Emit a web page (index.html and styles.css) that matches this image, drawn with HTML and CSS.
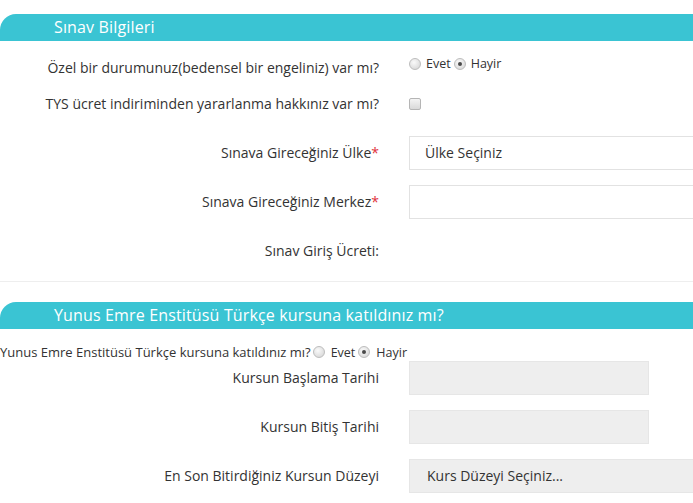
FILE: index.html
```html
<!DOCTYPE html>
<html lang="tr">
<head>
<meta charset="utf-8">
<title>Sınav Bilgileri</title>
<link rel="stylesheet" href="styles.css">
</head>
<body>
<div class="page">
  <div class="section-header">Sınav Bilgileri</div>
  <div class="form">
    <div class="row row-first">
      <div class="label">Özel bir durumunuz(bedensel bir engeliniz) var mı?</div>
      <div class="control control-radio">
        <span class="radio"></span><span class="opt">Evet</span>
        <span class="radio checked"></span><span class="opt">Hayir</span>
      </div>
    </div>
    <div class="row">
      <div class="label">TYS ücret indiriminden yararlanma hakkınız var mı?</div>
      <div class="control control-check">
        <span class="checkbox"></span>
      </div>
    </div>
    <div class="row">
      <div class="label">Sınava Gireceğiniz Ülke<span class="req">*</span></div>
      <div class="control">
        <div class="input wide">Ülke Seçiniz</div>
      </div>
    </div>
    <div class="row">
      <div class="label">Sınava Gireceğiniz Merkez<span class="req">*</span></div>
      <div class="control">
        <div class="input wide"></div>
      </div>
    </div>
    <div class="row">
      <div class="label">Sınav Giriş Ücreti:</div>
      <div class="control"></div>
    </div>
  </div>
  <hr class="divider">
  <div class="section-header">Yunus Emre Enstitüsü Türkçe kursuna katıldınız mı?</div>
  <div class="question">
    Yunus Emre Enstitüsü Türkçe kursuna katıldınız mı?<span class="radio"></span><span class="opt">Evet</span><span class="radio checked"></span><span class="opt">Hayir</span>
  </div>
  <div class="form form-2">
    <div class="row">
      <div class="label">Kursun Başlama Tarihi</div>
      <div class="control"><div class="input grey"></div></div>
    </div>
    <div class="row">
      <div class="label">Kursun Bitiş Tarihi</div>
      <div class="control"><div class="input grey"></div></div>
    </div>
    <div class="row">
      <div class="label">En Son Bitirdiğiniz Kursun Düzeyi</div>
      <div class="control"><div class="input grey wide select2">Kurs Düzeyi Seçiniz...</div></div>
    </div>
  </div>
</div>
</body>
</html>
```

FILE: styles.css
```css
html, body {
  margin: 0;
  padding: 0;
  background: #fff;
  overflow: hidden;
}
body {
  font-family: "Open Sans", "DejaVu Sans", sans-serif;
  font-size: 14px;
  color: #333;
}
.page {
  width: 693px;
  overflow: hidden;
  padding-top: 14px;
}
.section-header {
  height: 27px;
  line-height: 27px;
  background: #3ac4d3;
  color: #fff;
  font-size: 16px;
  letter-spacing: 0.15px;
  padding-left: 54px;
  border-top-left-radius: 16px;
  white-space: nowrap;
}
.form {
  display: flex;
  flex-direction: column;
  gap: 15px;
  padding-top: 10px;
}
.row {
  display: flex;
  align-items: flex-start;
  height: 34px;
}
.row-first {
  margin-bottom: -13px;
}
.label {
  width: 379px;
  flex: none;
  text-align: right;
  padding-top: 7px;
  line-height: 20px;
  white-space: nowrap;
}
.req {
  color: #e0303a;
}
.control {
  margin-left: 30px;
  flex: none;
  display: flex;
  align-items: center;
}
.control-radio {
  padding-top: 3px;
  line-height: 20px;
}
.control-check {
  padding-top: 11px;
}
.opt {
  font-size: 12.5px;
  margin-left: 5px;
  margin-right: 3px;
}
.radio {
  display: inline-block;
  width: 10px;
  height: 10px;
  border-radius: 50%;
  border: 1px solid #bdbdbd;
  background: radial-gradient(circle at 40% 35%, #fafafa 0%, #e2e2e2 60%, #cfcfcf 100%);
  position: relative;
  vertical-align: -1px;
}
.radio.checked::after {
  content: "";
  position: absolute;
  left: 3px;
  top: 3px;
  width: 4px;
  height: 4px;
  border-radius: 50%;
  background: #4a4a4a;
}
.checkbox {
  display: inline-block;
  width: 10px;
  height: 10px;
  border: 1px solid #b5b5b5;
  border-radius: 2px;
  background: linear-gradient(#f4f4f4, #d9d9d9);
}
.input {
  box-sizing: border-box;
  height: 34px;
  width: 240px;
  border: 1px solid #e2e2e2;
  background: #fff;
  padding: 6px 15px;
  line-height: 20px;
  font-size: 14px;
  white-space: nowrap;
}
.input.wide {
  width: 320px;
}
.input.grey {
  background: #eee;
  border-color: #e6e6e6;
}
.input.select2 {
  padding-left: 17px;
}
.divider {
  border: 0;
  border-top: 1px solid #eee;
  margin: 13px 0 20px;
}
.question {
  padding-top: 15px;
  font-size: 13px;
  line-height: 17px;
  white-space: nowrap;
}
.question .radio {
  margin-left: 2px;
}
.question .opt {
  font-size: 12.5px;
  margin-left: 6px;
  margin-right: 1px;
}
.form-2 {
  padding-top: 0;
}
```
